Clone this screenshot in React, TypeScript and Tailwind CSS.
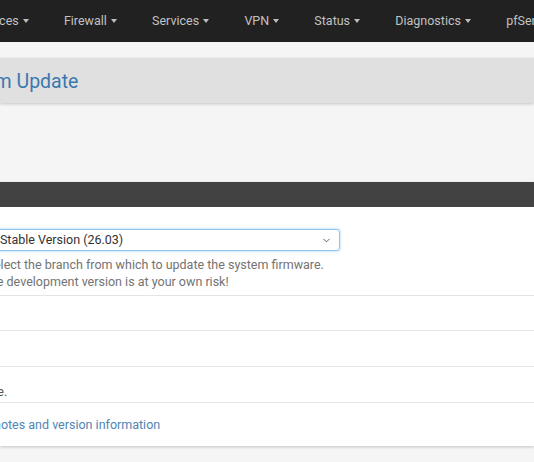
import { ChevronDown } from "lucide-react";

const navItems = ["Interfaces", "Firewall", "Services", "VPN", "Status", "Diagnostics", "pfSense"];

function Caret() {
  return (
    <span className="ml-[4px] inline-block h-0 w-0 border-x-[3.5px] border-t-[4px] border-x-transparent border-t-[#bdbdbd]" />
  );
}

type RowProps = {
  label: string;
  height: string;
  children?: React.ReactNode;
};

function FormRow({ label, height, children }: RowProps) {
  return (
    <div className={`flex border-t border-[#e4e4e4] ${height}`}>
      <div className="w-[170px] shrink-0 pr-[16px] text-right font-bold text-[#333]">{label}</div>
      <div className="flex-1">{children}</div>
    </div>
  );
}

export default function App() {
  return (
    <div className="h-[462px] w-[534px] overflow-hidden bg-[#f5f5f5] font-['Roboto',sans-serif] text-[12.5px]">
      <nav className="flex h-[42px] items-center bg-[#212121]">
        <div className="-ml-[55px] flex shrink-0 items-center">
          {navItems.map((item) => (
            <div key={item} className="flex items-center px-[17.6px] text-[12.5px] text-[#c2c2c2]">
              {item}
              {item !== "pfSense" ? <Caret /> : null}
            </div>
          ))}
        </div>
      </nav>

      <div className="mt-[16px] flex h-[45px] items-center bg-[#e0e0e0] shadow-[0_1px_3px_rgba(0,0,0,0.2)]">
        <h1 className="-ml-[53px] whitespace-nowrap pt-[2px] text-[19.5px] text-[#3c78b0]">System Update</h1>
      </div>

      <div className="mt-[79px] bg-white shadow-[0_1px_3px_rgba(0,0,0,0.2)]">
        <div className="flex h-[25px] items-center bg-[#424242] pl-[10px] text-white" />

        <div className="-ml-[223px] w-[1000px]">
          <div className="flex h-[88px] pt-[22px]">
            <div className="w-[170px] shrink-0 pr-[16px] pt-[3px] text-right font-bold text-[#333]">Branch</div>
            <div className="flex-1">
              <div className="flex h-[22px] w-[393px] items-center justify-between rounded-[3px] border border-[#8fc3e8] pl-[14px] pr-[7px] text-[#333] shadow-[0_0_3px_rgba(102,175,233,0.6)]">
                <span>Latest Stable Version (26.03)</span>
                <ChevronDown className="h-[11px] w-[11px] text-[#555]" strokeWidth={2} />
              </div>
              <p className="mt-[5px] leading-[17px] text-[#737373]">
                Please select the branch from which to update the system firmware.
                <br />
                Use of the development version is at your own risk!
              </p>
            </div>
          </div>

          <FormRow label="Current Version" height="h-[35px]" />
          <FormRow label="Latest Version" height="h-[36px]" />
          <FormRow label="Status" height="h-[36px]">
            <div className="pt-[16px] text-[#555]">Up to date.</div>
          </FormRow>
          <FormRow label="" height="h-[44px]">
            <a className="block pt-[13px] text-[#4f86b5]">Release notes and version information</a>
          </FormRow>
        </div>
      </div>
    </div>
  );
}
